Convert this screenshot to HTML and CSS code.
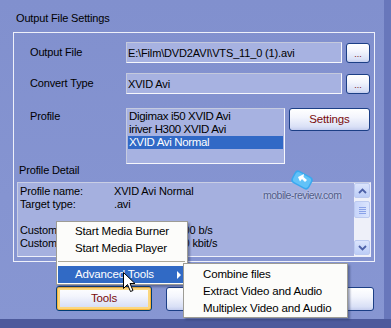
FILE: index.html
```html
<!DOCTYPE html>
<html>
<head>
<meta charset="utf-8">
<link rel="stylesheet" href="styles.css">
</head>
<body>
<div class="screen">
  <div class="main">
    <div class="dialog">
      <div class="title">Output File Settings</div>
      <div class="group">
        <div class="row r1">
          <div class="label">Output File</div>
          <div class="field">E:\Film\DVD2AVI\VTS_11_0 (1).avi</div>
          <div class="btn small">...</div>
        </div>
        <div class="row r2">
          <div class="label">Convert Type</div>
          <div class="field">XVID Avi</div>
          <div class="btn small">...</div>
        </div>
        <div class="row r3">
          <div class="label top">Profile</div>
          <div class="listbox">
            <div class="item">Digimax i50 XVID Avi</div>
            <div class="item">iriver H300 XVID Avi</div>
            <div class="item sel">XVID Avi Normal</div>
          </div>
          <div class="btn settings">Settings</div>
        </div>
        <div class="detail-label">Profile Detail</div>
        <div class="detail">
          <div class="detail-text">
            <span>Profile name:</span><span>XVID Avi Normal</span>
            <span>Target type:</span><span>.avi</span>
            <span>&nbsp;</span><span></span>
            <span>Custom audio:</span><span>44100 Hz, 96000 b/s</span>
            <span>Custom video:</span><span>48000 Hz, 1500 kbit/s</span>
          </div>
          <div class="scrollbar">
            <div class="sb-btn"><svg width="9" height="6" viewBox="0 0 9 6"><path d="M1 5 L4.5 1.5 L8 5" fill="none" stroke="#4d61a8" stroke-width="1.8"/></svg></div>
            <div class="sb-thumb"><svg width="7" height="8" viewBox="0 0 7 8"><path d="M0 1.5h7M0 3.5h7M0 5.5h7M0 7.5h7" stroke="#8aa2e8" stroke-width="1"/></svg></div>
            <div class="sb-track"></div>
            <div class="sb-btn"><svg width="9" height="6" viewBox="0 0 9 6"><path d="M1 1 L4.5 4.5 L8 1" fill="none" stroke="#4d61a8" stroke-width="1.8"/></svg></div>
          </div>
        </div>
        <div class="watermark">
          <svg class="wm-logo" width="28" height="22" viewBox="0 0 28 22"><g transform="rotate(28 14 11)"><rect x="4" y="4" width="20" height="14" rx="4" fill="#3aa8ef"/><rect x="5.5" y="5.5" width="17" height="11" rx="3" fill="#62c2f8"/></g><path d="M10 8 L16 5 L15.5 8 L19 11 L17 13 L14 10 L12 12.5 Z" fill="#fff"/></svg>
          <span class="wm-text">mobile-review.com</span>
        </div>
      </div>
      <div class="buttons">
        <div class="btn tools">Tools</div>
        <div class="btn wide"></div>
      </div>
    </div>
    <div class="edge"></div>
  </div>
  <div class="taskbar"></div>

  <div class="menu ctx">
    <div class="mi">Start Media Burner</div>
    <div class="mi">Start Media Player</div>
    <div class="sep"></div>
    <div class="mi hl">Advanced Tools<span class="arrow"></span></div>
  </div>
  <div class="menu sub">
    <div class="mi">Combine files</div>
    <div class="mi">Extract Video and Audio</div>
    <div class="mi">Multiplex Video and Audio</div>
  </div>
  <svg class="cursor" width="13" height="21" viewBox="0 0 13 21"><path d="M0.5 0.5 L0.5 16.5 L4.5 12.5 L7.5 19.5 L10 18.5 L7 11.5 L12 11.5 Z" fill="#fff" stroke="#000" stroke-width="1" stroke-linejoin="miter"/></svg>
</div>
</body>
</html>
```

FILE: styles.css
```css
* { box-sizing: border-box; }
html, body { margin: 0; padding: 0; }
body {
  width: 391px;
  height: 328px;
  overflow: hidden;
  font-family: "Liberation Sans", Arial, sans-serif;
  font-size: 11px;
  letter-spacing: -0.15px;
  color: #000;
}
.screen {
  position: relative;
  width: 391px;
  height: 328px;
  display: flex;
  flex-direction: column;
  background: linear-gradient(180deg, #8190ce 0%, #8594d1 60%, #8796d2 100%);
}
.main { display: flex; height: 319px; }
.dialog { flex: 1; display: flex; flex-direction: column; }
.edge { width: 7px; background: #6877bb; }
.taskbar { height: 9px; background: #4d5a9c; }

.title {
  padding: 12px 0 0 16px;
  line-height: 13px;
  height: 32px;
}
.group {
  position: relative;
  margin-left: 13px;
  width: 362px;
  height: 230px;
  border: 1px solid #eef0fa;
  padding: 9px 3px 4px 3px;
  display: flex;
  flex-direction: column;
}
.row { display: flex; align-items: center; padding-left: 13px; }
.r2 { margin-top: 10px; }
.r3 { margin-top: 14px; align-items: flex-start; }
.label { width: 96px; line-height: 13px; }
.label.top { margin-top: 2px; }
.field {
  width: 216px;
  height: 21px;
  background: #a7b2e1;
  border: 1px solid;
  border-color: #c4c9dc #f6f7fc #f6f7fc #c4c9dc;
  padding: 3px 0 0 1px;
  line-height: 14px;
  white-space: nowrap;
  overflow: hidden;
}
.btn {
  border: 1px solid #1c3f86;
  border-radius: 3px;
  background: linear-gradient(180deg, #ffffff 0%, #f3f5fd 40%, #d9e0f6 85%, #c4cdee 100%);
  color: #7a0b0b;
  text-align: center;
}
.btn.small {
  width: 24px;
  height: 20px;
  margin-left: 4px;
  line-height: 20px;
  font-size: 9px;
  letter-spacing: 0;
}
.listbox {
  width: 159px;
  height: 56px;
  background: #a7b2e1;
  border: 1px solid;
  border-color: #c6cbe0 #f6f7fc #f6f7fc #c6cbe0;
  padding: 1px 1px 0 1px;
}
.item { line-height: 13px; height: 13px; padding-left: 1px; white-space: nowrap; font-size: 11.5px; letter-spacing: -0.35px; }
.item.sel { background: #3169c6; color: #fff; }
.btn.settings {
  width: 81px;
  height: 23px;
  margin-left: 4px;
  line-height: 21px;
  font-size: 11.5px;
}
.detail-label { line-height: 13px; height: 13px; padding-left: 2px; }
.detail {
  margin-top: 5px;
  height: 75px;
  background: #a5b0df;
  border: 1px solid;
  border-color: #c9cee4 #eef0fa #eef0fa #c9cee4;
  display: flex;
}
.detail-text {
  flex: 1;
  padding: 2px 0 0 2px;
  display: grid;
  grid-template-columns: 94px 1fr;
  grid-auto-rows: 13px;
  line-height: 13px;
  white-space: nowrap;
  overflow: hidden;
}
.scrollbar {
  width: 16px;
  background: #eef0f9;
  display: flex;
  flex-direction: column;
  align-items: center;
  padding: 0 0 1px;
}
.sb-btn {
  width: 16px;
  height: 15px;
  border: 1px solid #bccaf0;
  border-radius: 2px;
  background: linear-gradient(180deg, #dbe4fc, #bccdf7);
  display: flex;
  align-items: center;
  justify-content: center;
}
.sb-thumb {
  margin-top: 3px;
  width: 16px;
  height: 17px;
  border: 1px solid #bccaf0;
  border-radius: 2px;
  background: linear-gradient(90deg, #c7d5fb, #dbe5fd);
  display: flex;
  align-items: center;
  justify-content: center;
}
.sb-track { flex: 1; }

.watermark {
  position: absolute;
  left: 249px;
  top: 136px;
  width: 80px;
  height: 36px;
}
.wm-logo { position: absolute; left: 25px; top: 0; }
.wm-text {
  position: absolute;
  left: 0;
  top: 20px;
  font-size: 10.5px;
  letter-spacing: -0.5px;
  color: #4f5a85;
  text-shadow: 0 0 2px #e4eaff;
  white-space: nowrap;
}

.buttons {
  display: flex;
  margin-top: 24px;
  padding-left: 56px;
  gap: 14px;
}
.btn.tools {
  width: 96px;
  height: 25px;
  line-height: 23px;
  font-size: 11.5px;
  border-color: #003c74;
  box-shadow: inset 0 0 0 1px #f8b53a, inset 0 0 0 3px #fbd77f;
}
.btn.wide { width: 208px; height: 24px; margin-top: 1px; }

.menu {
  position: absolute;
  background: #fcfcfa;
  border: 1px solid #9d9c95;
  box-shadow: 2px 2px 2px rgba(40, 50, 90, 0.45);
}
.ctx { left: 56px; top: 221px; width: 132px; height: 64px; padding: 1px 0; }
.sub { left: 183px; top: 263px; width: 165px; height: 55px; padding-top: 2px; }
.mi { height: 17px; line-height: 17px; white-space: nowrap; position: relative; }
.ctx .mi { padding-left: 17px; margin: 0 1px; font-size: 11.5px; }
.sub .mi { padding-left: 19px; font-size: 11.5px; }
.mi.hl { background: #316ac5; color: #fff; }
.sep { height: 9px; position: relative; }
.sep::after {
  content: "";
  position: absolute;
  left: 1px;
  right: 2px;
  top: 4px;
  border-top: 1px solid #aca899;
}
.arrow {
  position: absolute;
  left: 119px;
  top: 5px;
  width: 0;
  height: 0;
  border-left: 4px solid #fff;
  border-top: 4px solid transparent;
  border-bottom: 4px solid transparent;
}
.cursor { position: absolute; left: 123px; top: 272px; }
```
